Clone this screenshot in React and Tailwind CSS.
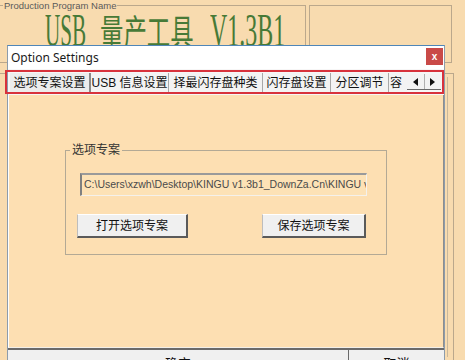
import React from 'react';

const tabs = [
  { label: '选项专案设置', w: 'w-[81px]', active: true },
  { label: 'USB 信息设置', w: 'w-[78px]' },
  { label: '择最闪存盘种类', w: 'w-[94px]' },
  { label: '闪存盘设置', w: 'w-[68px]' },
  { label: '分区调节', w: 'w-[58px]' },
];

const Arrow = ({ dir }) => (
  <svg width="5" height="8" viewBox="0 0 5 8">
    {dir === 'left'
      ? <polygon points="5,0 5,8 0,4" fill="#111" />
      : <polygon points="0,0 0,8 5,4" fill="#111" />}
  </svg>
);

export default function App() {
  return (
    <div className="relative w-[465px] h-[360px] overflow-hidden bg-[#f8dbaf] font-['Liberation_Sans','Noto_Sans_CJK_SC',sans-serif]">
      {/* main window behind the dialog */}
      <div className="flex">
        <fieldset className="w-[306px] h-[63px] border-t border-r border-b border-[#bba88c]">
          <legend className="ml-[3px] px-[1px] text-[9.5px] leading-[11px] text-[#5a5a5a]">Production Program Name</legend>
          <div className="flex items-baseline pl-[45px] leading-[38px] text-[#477a37]">
            <span className="w-[41px] font-['Liberation_Serif',serif] text-[46px]">
              <span className="inline-block origin-left scale-x-[0.46] whitespace-nowrap">USB</span>
            </span>
            <span className="ml-[14px] w-[93px] font-['Noto_Sans_CJK_SC',sans-serif] text-[36px]">
              <span className="inline-block origin-left scale-x-[0.65] whitespace-nowrap">量产工具</span>
            </span>
            <span className="ml-[17px] w-[75px] font-['Liberation_Serif',serif] text-[46px]">
              <span className="inline-block origin-left scale-x-[0.52] whitespace-nowrap">V1.3B1</span>
            </span>
          </div>
        </fieldset>
        <div className="ml-[3px] mt-[5px] w-[143px] h-[58px] border border-[#bba88c]" />
      </div>
      <div className="mt-[10px] ml-[-2px] w-[456px] h-[300px] border border-[#bba88c] pr-[3px]">
        <div className="ml-auto mr-[2px] mt-[3px] w-[8px] h-[280px] border-x border-[#c8b89c]" />
      </div>

      {/* Option Settings dialog */}
      <div className="absolute left-[7px] top-[45px] w-[438px] h-[380px] flex flex-col bg-[#f0f0f0] border border-[#8c9cac] border-t-[#4f86b8]">
        <div className="h-[23px] shrink-0 bg-white flex items-start justify-between">
          <span className="ml-[3px] mt-[4px] text-[12px] leading-[15px] text-[#1a1a1a] font-['Noto_Sans',sans-serif]">Option Settings</span>
          <div className="mt-[2px] mr-[1px] w-[17px] h-[17px] bg-[#c94a48] text-white text-[10px] font-bold leading-none flex items-center justify-center font-['Liberation_Sans',sans-serif]">x</div>
        </div>

        <div className="h-[26px] shrink-0 bg-[#f6f6f6] flex items-end pl-[2px] pb-[2px]">
          {tabs.map((t) => (
            <div
              key={t.label}
              className={`${t.w} h-[20px] flex items-center justify-center text-[12px] leading-none text-[#111] border-r ${t.active ? 'bg-[#ececec] border-r-2 border-[#8a8a8a]' : 'bg-[#f3f3f3] border-[#a8a8a8]'}`}
            >
              {t.label}
            </div>
          ))}
          <div className="w-[18px] h-[20px] overflow-hidden flex items-center pl-[1px] text-[12px] leading-none text-[#111] bg-[#f3f3f3]">容</div>
          <div className="w-[34px] h-[16px] mb-[3px] flex border-b border-[#6a6a6a] bg-[#f3f3f3]">
            <div className="flex-1 flex items-center justify-center border-r border-[#b0b0b0]"><Arrow dir="left" /></div>
            <div className="flex-1 flex items-center justify-center"><Arrow dir="right" /></div>
          </div>
        </div>

        <div className="h-[253px] shrink-0 bg-[#fddfb2] border-l border-l-white border-r border-r-[#8d8d8d] border-b border-b-[#f3efe8] pl-[56px] pt-[48px]">
          <fieldset className="w-[322px] h-[112px] border border-[#b3a995]">
            <legend className="ml-[4px] px-[2px] text-[12px] leading-[14px] text-[#333]">选项专案</legend>
            <div className="ml-[14px] mt-[16px] w-[287px] h-[23px] flex items-center pl-[2px] overflow-hidden whitespace-nowrap bg-[#fde2b6] border-t-2 border-l-2 border-t-[#9a9a9a] border-l-[#808080] border-r border-b border-r-[#f4f1ec] border-b-[#f4f1ec] text-[10.5px] text-[#4a4a4a]">
              C:\Users\xzwh\Desktop\KINGU v1.3b1_DownZa.Cn\KINGU v
            </div>
            <div className="flex mt-[18px] ml-[11px]">
              <div className="w-[111px] h-[24px] flex items-center justify-center bg-[#f0f0f0] border border-t-white border-l-[#bdbdbd] border-r-2 border-b-2 border-r-[#5a5a5a] border-b-[#5a5a5a] text-[12px] text-[#111]">打开选项专案</div>
              <div className="ml-[74px] w-[104px] h-[24px] flex items-center justify-center bg-[#f0f0f0] border border-t-white border-l-[#bdbdbd] border-r-2 border-b-2 border-r-[#5a5a5a] border-b-[#5a5a5a] text-[12px] text-[#111]">保存选项专案</div>
            </div>
          </fieldset>
        </div>

        <div className="h-[28px] shrink-0 flex text-[13px] text-[#111]">
          <div className="w-[341px] flex justify-center pt-[4px] bg-[#f0f0f0] border-t-2 border-r border-[#6a6a6a]">确定</div>
          <div className="flex-1 flex justify-center pt-[4px] bg-[#f0f0f0] border-t-2 border-[#6a6a6a]">取消</div>
        </div>
      </div>

      {/* red highlight around the tab strip */}
      <div className="absolute left-[5px] top-[70px] w-[439px] h-[24px] border-2 border-[#d8323c] pointer-events-none" />
    </div>
  );
}
